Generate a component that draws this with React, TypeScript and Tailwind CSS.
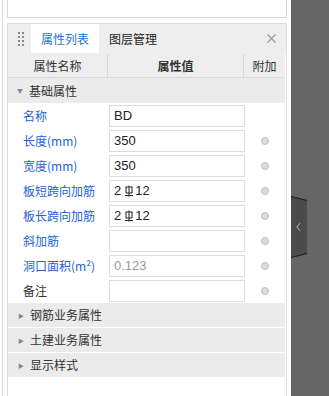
import React from "react";

type Row = {
  label: string;
  value: string;
  blue?: boolean;
  rebar?: boolean;
  disabled?: boolean;
  dot?: boolean;
};

const rows: Row[] = [
  { label: "名称", value: "BD", blue: true },
  { label: "长度(mm)", value: "350", blue: true, dot: true },
  { label: "宽度(mm)", value: "350", blue: true, dot: true },
  { label: "板短跨向加筋", value: "12", blue: true, rebar: true, dot: true },
  { label: "板长跨向加筋", value: "12", blue: true, rebar: true, dot: true },
  { label: "斜加筋", value: "", blue: true, dot: true },
  { label: "洞口面积(m²)", value: "0.123", blue: true, disabled: true, dot: true },
  { label: "备注", value: "", dot: true },
];

const groups = ["钢筋业务属性", "土建业务属性", "显示样式"];

function RebarMark() {
  // 三级钢符号
  return (
    <svg width="10" height="12" viewBox="0 0 10 12" className="ml-[3px] mr-[1px] inline-block">
      <path
        d="M5 0.5 V11.5 M1.5 2 H8.5 M2 2 V8 H8 V2 M1 10.5 H9"
        stroke="#222"
        strokeWidth="1"
        fill="none"
      />
    </svg>
  );
}

function DragHandle() {
  return (
    <div className="grid w-[6px] grid-cols-2 gap-x-[2px] gap-y-[2px]">
      {Array.from({ length: 8 }).map((_, i) => (
        <div key={i} className="h-[2px] w-[2px] bg-[#8a8a8a]" />
      ))}
    </div>
  );
}

export default function App() {
  return (
    <div
      className="flex h-[396px] w-[329px] overflow-hidden bg-white text-[12px] text-[#333]"
      style={{ fontFamily: '"Noto Sans CJK SC", "Liberation Sans", sans-serif' }}
    >
      <div className="h-full w-[291px] pl-[2px]">
        <div className="h-full border-l border-[#dcdcdc] pl-[4px]">
          <div className="h-[18px] w-[280px] border-x border-b border-[#d9d9d9] bg-white" />

          <div className="mt-[5px] h-[400px] w-[280px] border border-[#dcdcdc]">
            {/* tabs */}
            <div className="flex h-[30px] items-stretch bg-[#eeeeef] pb-px">
              <div className="flex w-[23px] items-center justify-center pl-[2px]">
                <DragHandle />
              </div>
              <div className="flex w-[68px] items-center justify-center bg-white text-[#2b6fd6]">
                属性列表
              </div>
              <div className="flex items-center pl-[10px] text-[#222]">图层管理</div>
              <div className="ml-auto flex w-[30px] items-center justify-center">
                <svg width="9" height="9" viewBox="0 0 9 9">
                  <path d="M0.5 0.5 L8.5 8.5 M8.5 0.5 L0.5 8.5" stroke="#9a9a9a" strokeWidth="1.2" />
                </svg>
              </div>
            </div>

            {/* table */}
            <div className="w-[277px]">
              <div className="flex h-[24px] border-b border-[#dadada] bg-[#eeeeee]">
                <div className="flex w-[100px] items-center justify-center border-r border-[#d6d6d6]">
                  属性名称
                </div>
                <div className="flex w-[136px] items-center justify-center border-r border-[#d6d6d6] font-bold">
                  属性值
                </div>
                <div className="flex flex-1 items-center justify-center">附加</div>
              </div>

              <div className="flex h-[25px] items-center bg-[#ebebeb]">
                <span className="ml-[9px] mr-[6px] text-[6px] text-[#888]">▼</span>
                <span>基础属性</span>
              </div>

              {rows.map((r) => (
                <div key={r.label} className="flex h-[25px] items-center">
                  <div
                    className={`w-[101px] pl-[15px] ${r.blue ? "text-[#2362d8]" : "text-[#333]"}`}
                  >
                    {r.label}
                  </div>
                  <div
                    className={`flex h-[22px] w-[136px] items-center border border-[#dcdcdc] pl-[4px] text-[13px] ${
                      r.disabled ? "text-[#9a9a9a]" : "text-[#222]"
                    }`}
                    style={{ fontFamily: '"Liberation Sans", sans-serif' }}
                  >
                    {r.rebar ? (
                      <>
                        2<RebarMark />
                        {r.value}
                      </>
                    ) : (
                      r.value
                    )}
                  </div>
                  <div className="flex flex-1 items-center justify-center">
                    {r.dot ? (
                      <div className="h-[8px] w-[8px] rounded-full border border-[#bcbcbc] bg-[#dcdcdc]" />
                    ) : null}
                  </div>
                </div>
              ))}

              {groups.map((g) => (
                <div key={g} className="flex h-[25px] items-center border-b border-white bg-[#ebebeb]">
                  <span className="ml-[10px] mr-[6px] text-[6px] text-[#888]">▶</span>
                  <span>{g}</span>
                </div>
              ))}
            </div>
          </div>
        </div>
      </div>

      <div className="relative h-full flex-1 bg-[#666666]">
        <div className="absolute left-0 top-[196px]">
          <svg width="17" height="62" viewBox="0 0 17 62">
            <path d="M0 0 L16 4 L16 58 L0 62 Z" fill="#4b4b4b" />
            <path d="M0 0.5 L16 4.5 M0 61.5 L16 57.5" stroke="#1e1e1e" strokeWidth="1" />
            <path d="M9 27 L6 31 L9 35" stroke="#9a9a9a" strokeWidth="1.2" fill="none" />
          </svg>
        </div>
      </div>
    </div>
  );
}
